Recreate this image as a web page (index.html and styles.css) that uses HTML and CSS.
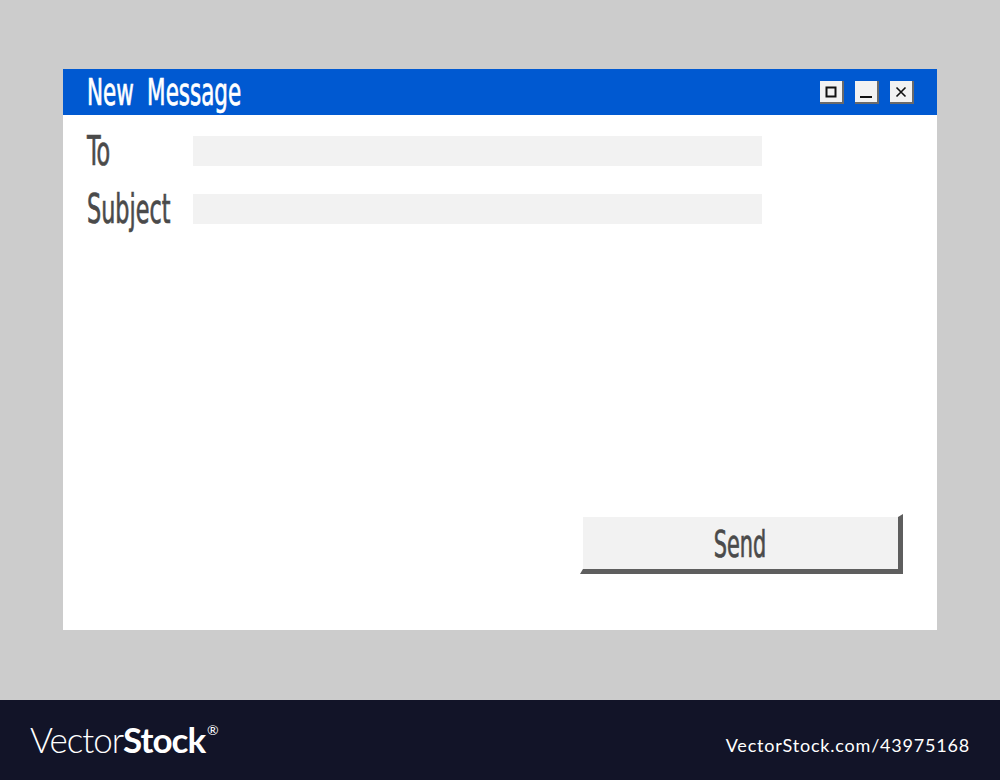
FILE: index.html
```html
<!DOCTYPE html>
<html>
<head>
<meta charset="utf-8">
<link rel="stylesheet" href="styles.css">
</head>
<body>
<div class="stage">
  <div class="window">
    <div class="titlebar">
      <span class="title cond">New Message</span>
      <div class="controls">
        <button class="ctl"><svg width="12" height="12" viewBox="0 0 12 12"><rect x="1.5" y="1.5" width="9" height="9" fill="none" stroke="#111" stroke-width="2"/></svg></button>
        <button class="ctl"><svg width="14" height="12" viewBox="0 0 14 12"><rect x="1" y="10" width="12" height="2" fill="#111"/></svg></button>
        <button class="ctl"><svg width="12" height="12" viewBox="0 0 12 12"><path d="M1.5 1.5L10.5 10.5M10.5 1.5L1.5 10.5" stroke="#111" stroke-width="1.6"/></svg></button>
      </div>
    </div>
    <div class="content">
      <div class="row">
        <span class="label"><span class="cond lab">To</span></span>
        <div class="field"></div>
      </div>
      <div class="row">
        <span class="label"><span class="cond lab">Subject</span></span>
        <div class="field"></div>
      </div>
      <div class="actions">
        <button class="send"><span class="cond sendtxt">Send</span></button>
      </div>
    </div>
  </div>
</div>
<footer class="footer">
  <div class="logo"><span class="thin">Vector</span><span class="bold">Stock</span><sup class="reg">®</sup></div>
  <div class="url">VectorStock.com/43975168</div>
</footer>
</body>
</html>
```
FILE: styles.css
```css
html, body {
  margin: 0;
  padding: 0;
}
body {
  width: 1000px;
  height: 780px;
  background: #cccccc;
  font-family: "DejaVu Sans Condensed", "Liberation Sans", sans-serif;
  overflow: hidden;
}
.stage {
  height: 700px;
  box-sizing: border-box;
  padding: 69px 0 0 63px;
}
.window {
  width: 874px;
  height: 561px;
  background: #ffffff;
  display: flex;
  flex-direction: column;
}
.titlebar {
  height: 46px;
  background: #0059d1;
  display: flex;
  align-items: center;
  justify-content: space-between;
  padding: 0 23px 0 24px;
}
.cond {
  display: inline-block;
  white-space: nowrap;
  transform-origin: left center;
  -webkit-text-stroke: 0.7px currentColor;
}
.title {
  color: #ffffff;
  font-size: 37px;
  line-height: 46px;
  margin-top: 2px;
  transform: scaleX(0.645);
  word-spacing: 10px;
}
.controls {
  display: flex;
  gap: 11px;
  margin-top: 1px;
}
.ctl {
  width: 24px;
  height: 23px;
  padding: 0;
  margin: 0;
  background: #f2f2f2;
  border: none;
  border-right: 2px solid #6a6a6a;
  border-bottom: 2px solid #6a6a6a;
  display: flex;
  align-items: center;
  justify-content: center;
  box-sizing: border-box;
}
.content {
  flex: 1;
  padding: 21px 0 0 24px;
  display: flex;
  flex-direction: column;
}
.row {
  display: flex;
  align-items: center;
  height: 30px;
  margin-bottom: 28px;
}
.label {
  width: 106px;
  color: #4a4a4a;
  font-size: 40px;
  line-height: 30px;
}
.lab {
  transform: scaleX(0.62);
}
.field {
  width: 569px;
  height: 30px;
  background: #f2f2f2;
}
.actions {
  display: flex;
  justify-content: flex-end;
  padding-right: 34px;
  margin-top: 262px;
}
.send {
  width: 323px;
  height: 60px;
  box-sizing: border-box;
  margin: 0;
  padding: 0;
  background: #f2f2f2;
  background-clip: padding-box;
  border-style: solid;
  border-width: 3px 5px 5px 3px;
  border-color: transparent #5e5e5e #5e5e5e transparent;
  color: #4a4a4a;
  font-family: inherit;
  font-size: 38px;
  display: flex;
  align-items: center;
  justify-content: center;
}
.sendtxt {
  transform: scaleX(0.61);
  transform-origin: center center;
  margin-top: 2px;
}
.footer {
  height: 80px;
  background: #121428;
  display: flex;
  align-items: center;
  justify-content: space-between;
  padding: 0 30px 0 30px;
  color: #ffffff;
  font-family: Lato, "Open Sans", sans-serif;
}
.logo {
  font-size: 35px;
  letter-spacing: -1px;
  margin-top: -2px;
}
.thin {
  font-weight: 300;
}
.bold {
  font-weight: 700;
}
.reg {
  font-size: 14px;
  font-weight: 400;
  vertical-align: 18px;
  margin-left: 2px;
}
.url {
  font-size: 18px;
  letter-spacing: 0.8px;
  margin-top: 10px;
}
```
